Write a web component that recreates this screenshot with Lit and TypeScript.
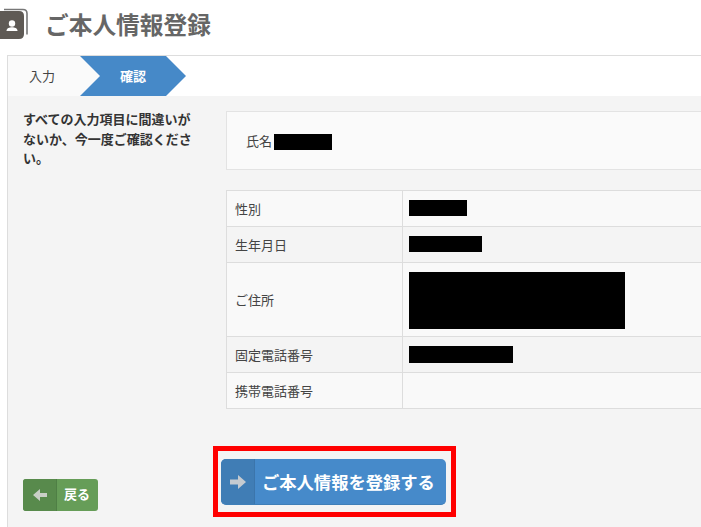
import { LitElement, html, css } from "lit";
import { customElement } from "lit/decorators.js";

const arrowRight = html`<svg width="16" height="14" viewBox="0 0 16 14"><path d="M0 4.500h8V0l8 7-8 7V9.500H0z" fill="#c6cbd0"/></svg>`;
const arrowLeft = html`<svg width="14" height="12" viewBox="0 0 14 12"><path d="M14 4H7V0L0 6l7 6V8h7z" fill="#c9cfc6"/></svg>`;

@customElement("app-root")
export class AppRoot extends LitElement {
  static styles = css`
    :host {
      display: block;
      width: 701px;
      height: 527px;
      overflow: hidden;
      background: #fff;
      font-family: "Liberation Sans", "Noto Sans CJK JP", sans-serif;
      color: #333;
      font-size: 13px;
    }
    .head {
      height: 55px;
      display: flex;
      align-items: flex-start;
      padding-top: 8px;
      box-sizing: border-box;
      gap: 16px;
    }
    .head svg { display: block; flex: none; }
    h1 {
      margin: -1px 0 0;
      font-size: 23.700px;
      line-height: 38px;
      font-weight: 700;
      color: #666;
    }
    .panel {
      margin-left: 7px;
      border-top: 1px solid #ddd;
      border-left: 1px solid #ddd;
      height: 471px;
      width: 760px;
    }
    .tabs { display: flex; height: 40px; background: #fff; }
    .tab-in {
      width: 92px;
      height: 40px;
      background: #fafafa;
      clip-path: polygon(0 0, 72px 0, 92px 20px, 72px 40px, 0 40px);
      display: flex;
      align-items: center;
      padding: 0 0 2px 21px;
      box-sizing: border-box;
      color: #444;
    }
    .tab-ok {
      width: 106px;
      height: 40px;
      margin-left: -20px;
      background: #4689c8;
      clip-path: polygon(0 0, 86px 0, 106px 20px, 86px 40px, 0 40px, 20px 20px);
      color: #fff;
      font-weight: 700;
      display: flex;
      align-items: center;
      padding: 0 0 2px 40px;
      box-sizing: border-box;
    }
    .body {
      height: 431px;
      background: #f4f4f4;
      display: grid;
      grid-template-columns: 218px 1fr;
      padding-top: 15px;
      box-sizing: border-box;
    }
    .side {
      padding-left: 15px;
      width: 190px;
      box-sizing: border-box;
      font-weight: 700;
      line-height: 19.500px;
      color: #333;
      margin-top: -1px;
      display: flex;
      flex-direction: column;
    }
    .side p { margin: 0; flex: 1; }
    .back {
      display: flex;
      width: 75px;
      height: 32px;
      border-radius: 3px;
      overflow: hidden;
      background: #669d58;
      color: #fff;
      font-weight: 700;
      margin-bottom: 16px;
    }
    .back .ic {
      width: 34px;
      background: #588a4c;
      border-right: 1px solid #4f7f45;
      box-sizing: border-box;
      display: flex;
      align-items: center;
      justify-content: center;
    }
    .back .tx { flex: 1; display: flex; align-items: center; padding-left: 7px; }
    .main { width: 534px; display: flex; flex-direction: column; }
    .name {
      height: 59px;
      box-sizing: border-box;
      border: 1px solid #e3e3e3;
      background: #fafafa;
      display: flex;
      align-items: center;
      padding-left: 19px;
      margin-bottom: 20px;
      color: #444;
    }
    .blk { display: block; background: #000; }
    .name .blk { width: 58px; height: 16px; margin: 2px 0 0 2px; }
    .grid {
      display: grid;
      grid-template-columns: 176px 1fr;
      border: 1px solid #ddd;
      border-bottom: 0;
      box-sizing: border-box;
    }
    .k, .v {
      box-sizing: border-box;
      border-bottom: 1px solid #ddd;
      display: flex;
      align-items: center;
      height: 36px;
    }
    .k { padding: 0 0 1px 8px; border-right: 1px solid #ddd; color: #444; }
    .v { padding: 0 0 2px 6px; }
    .odd { background: #f9f9f9; }
    .even { background: #f4f4f4; }
    .tall { height: 74px; }
    .v.tall { padding: 2px 0 0 6px; }
    .v.flush { padding-bottom: 0; }
    .actions { margin-top: 37px; margin-left: -13px; }
    .hl {
      width: 243px;
      height: 71px;
      border: 5px solid #f00;
      box-sizing: border-box;
      padding: 8px 0 0 3px;
      background: #f4f4f4;
    }
    .go {
      display: flex;
      width: 225px;
      height: 46px;
      border-radius: 5px;
      border-bottom: 1px solid #3f7fb8;
      box-sizing: border-box;
      overflow: hidden;
      background: #468aca;
      color: #fff;
      font-weight: 700;
      font-size: 17.300px;
    }
    .go .ic {
      width: 34px;
      background: #407db5;
      border-right: 1px solid #3b75ab;
      box-sizing: border-box;
      display: flex;
      align-items: center;
      justify-content: center;
    }
    .go .tx { flex: 1; display: flex; align-items: center; padding-left: 7px; white-space: nowrap; }
  `;

  render() {
    const rows = [
      ["性別", 58, 16, "odd", ""],
      ["生年月日", 73, 16, "even", ""],
      ["ご住所", 216, 57, "odd", "tall"],
      ["固定電話番号", 104, 17, "even", "flush"],
      ["携帯電話番号", 0, 0, "odd", ""],
    ] as const;
    return html`
      <div class="head">
        <svg width="29" height="31" viewBox="0 0 29 31">
          <path d="M4 1.500h19q4 0 4 4v21" fill="none" stroke="#777" stroke-width="1.600"/>
          <path d="M-3 3h22q5 0 5 5v18q0 5-5 5H-3z" fill="#5f5a55"/>
          <circle cx="12" cy="15.500" r="3.200" fill="#fff"/>
          <path d="M6.500 23c0-3 3-3.800 5.500-3.800s5.500 .8 5.500 3.800z" fill="#fff"/>
        </svg>
        <h1>ご本人情報登録</h1>
      </div>
      <div class="panel">
        <div class="tabs">
          <div class="tab-in">入力</div>
          <div class="tab-ok">確認</div>
        </div>
        <div class="body">
          <div class="side">
            <p>すべての入力項目に間違いがないか、今一度ご確認ください。</p>
            <div class="back">
              <div class="ic">${arrowLeft}</div>
              <div class="tx">戻る</div>
            </div>
          </div>
          <div class="main">
            <div class="name">氏名<span class="blk"></span></div>
            <div class="grid">
              ${rows.map(
                ([k, w, h, c, t]) => html`
                  <div class="k ${c} ${t === "tall" ? t : ""}">${k}</div>
                  <div class="v ${c} ${t}">
                    ${w ? html`<span class="blk" style="width:${w}px;height:${h}px"></span>` : ""}
                  </div>
                `
              )}
            </div>
            <div class="actions">
              <div class="hl">
                <div class="go">
                  <div class="ic">${arrowRight}</div>
                  <div class="tx">ご本人情報を登録する</div>
                </div>
              </div>
            </div>
          </div>
        </div>
      </div>
    `;
  }
}
